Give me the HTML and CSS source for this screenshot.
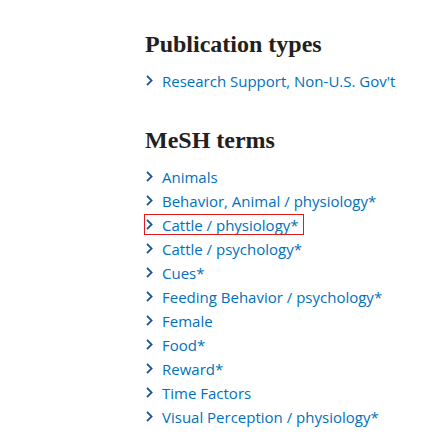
FILE: index.html
```html
<!DOCTYPE html>
<html>
<head>
<meta charset="utf-8">
<link rel="stylesheet" href="styles.css">
</head>
<body>
<main class="page">
  <section class="section">
    <h2 class="title">Publication types</h2>
    <ul class="terms">
      <li class="term"><svg class="chev" viewBox="0 0 7 11"><path d="M1 0.8 L5.6 5.5 L1 10.2"/></svg><a class="link">Research Support, Non-U.S. Gov't</a></li>
    </ul>
  </section>
  <section class="section">
    <h2 class="title">MeSH terms</h2>
    <ul class="terms">
      <li class="term"><svg class="chev" viewBox="0 0 7 11"><path d="M1 0.8 L5.6 5.5 L1 10.2"/></svg><a class="link">Animals</a></li>
      <li class="term"><svg class="chev" viewBox="0 0 7 11"><path d="M1 0.8 L5.6 5.5 L1 10.2"/></svg><a class="link">Behavior, Animal / physiology*</a></li>
      <li class="term selected"><svg class="chev" viewBox="0 0 7 11"><path d="M1 0.8 L5.6 5.5 L1 10.2"/></svg><a class="link">Cattle / physiology*</a></li>
      <li class="term"><svg class="chev" viewBox="0 0 7 11"><path d="M1 0.8 L5.6 5.5 L1 10.2"/></svg><a class="link">Cattle / psychology*</a></li>
      <li class="term"><svg class="chev" viewBox="0 0 7 11"><path d="M1 0.8 L5.6 5.5 L1 10.2"/></svg><a class="link">Cues*</a></li>
      <li class="term"><svg class="chev" viewBox="0 0 7 11"><path d="M1 0.8 L5.6 5.5 L1 10.2"/></svg><a class="link">Feeding Behavior / psychology*</a></li>
      <li class="term"><svg class="chev" viewBox="0 0 7 11"><path d="M1 0.8 L5.6 5.5 L1 10.2"/></svg><a class="link">Female</a></li>
      <li class="term"><svg class="chev" viewBox="0 0 7 11"><path d="M1 0.8 L5.6 5.5 L1 10.2"/></svg><a class="link">Food*</a></li>
      <li class="term"><svg class="chev" viewBox="0 0 7 11"><path d="M1 0.8 L5.6 5.5 L1 10.2"/></svg><a class="link">Reward*</a></li>
      <li class="term"><svg class="chev" viewBox="0 0 7 11"><path d="M1 0.8 L5.6 5.5 L1 10.2"/></svg><a class="link">Time Factors</a></li>
      <li class="term"><svg class="chev" viewBox="0 0 7 11"><path d="M1 0.8 L5.6 5.5 L1 10.2"/></svg><a class="link">Visual Perception / physiology*</a></li>
    </ul>
  </section>
</main>
</body>
</html>
```

FILE: styles.css
```css
html, body {
  margin: 0;
  padding: 0;
  background: #ffffff;
}
.page {
  padding: 29px 0 0 145px;
  display: flex;
  flex-direction: column;
  gap: 32px;
}
.title {
  margin: 0 0 10px 0;
  font-family: "Liberation Serif", "DejaVu Serif", serif;
  font-weight: bold;
  font-size: 24px;
  line-height: 30px;
  color: #212121;
}
.terms {
  list-style: none;
  margin: 0;
  padding: 0;
}
.term {
  display: flex;
  align-items: center;
  height: 24px;
  font-family: "Open Sans", "Noto Sans", sans-serif;
  font-size: 15px;
  color: #0071bc;
}
.term.selected {
  outline: 1px solid #e01b1b;
  width: fit-content;
  height: 19px;
  margin: 2px 0 3px 0;
  padding-right: 4px;
}
.chev {
  width: 7px;
  height: 11px;
  margin: 0 9px 1px 1px;
  flex: none;
  fill: none;
  stroke: #205493;
  stroke-width: 1.8;
}
.link {
  color: #0071bc;
}
```
